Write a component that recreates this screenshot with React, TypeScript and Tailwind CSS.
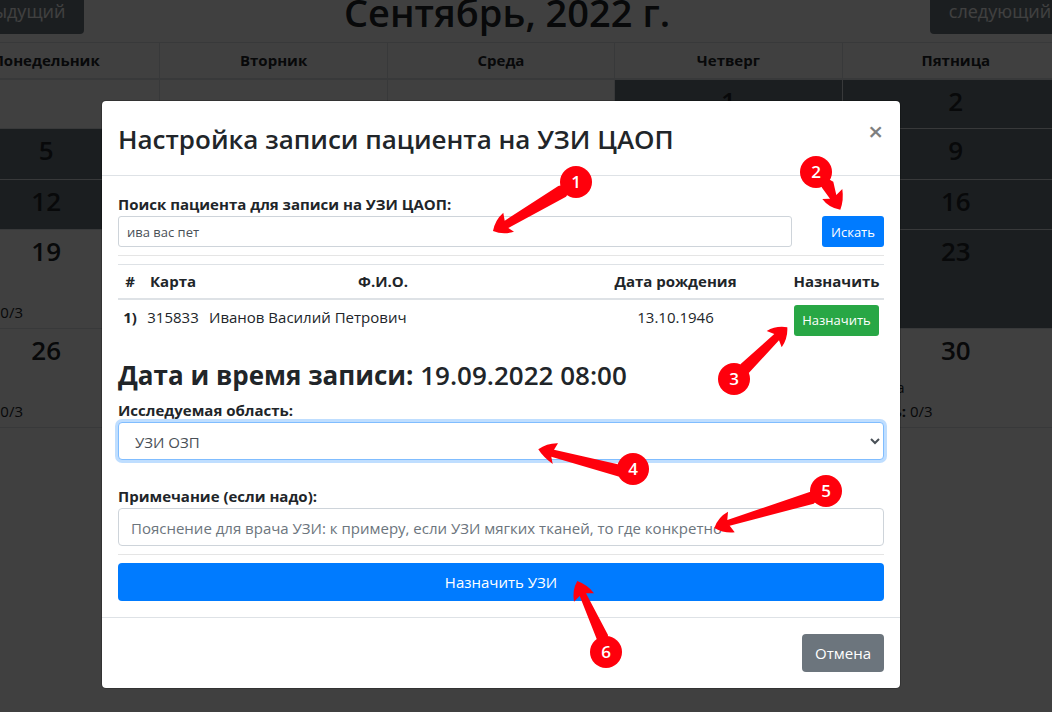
import React, { useState } from "react";

type Slot = { day?: number; busy?: boolean; name?: string; label?: string; quota?: string };

const weekdays = ["Понедельник", "Вторник", "Среда", "Четверг", "Пятница"];

const weeks: { height: string; slots: Slot[] }[] = [
  { height: "h-[50px]", slots: [{}, {}, {}, { day: 1, busy: true }, { day: 2, busy: true }] },
  {
    height: "h-[51px]",
    slots: [{ day: 5, busy: true }, { busy: true }, { busy: true }, { busy: true }, { day: 9, busy: true }],
  },
  {
    height: "h-[50px]",
    slots: [{ day: 12, busy: true }, { busy: true }, { busy: true }, { busy: true }, { day: 16, busy: true }],
  },
  {
    height: "h-[99px]",
    slots: [{ day: 19, quota: "0/3" }, {}, {}, {}, { day: 23, busy: true }],
  },
  {
    height: "h-[99px]",
    slots: [{ day: 26, quota: "0/3" }, {}, {}, {}, { day: 30, name: "а", label: "ь:", quota: "0/3" }],
  },
];

const markers = [
  { n: 1, x: 576, y: 182, d: "M493 231Q495 220 503.3 212.7L504.7 220.7L558.3 186L576 182L566 196.7L508.3 228L514 231.7Q503 235 493 231Z" },
  { n: 2, x: 816, y: 172, d: "M840.3 209.7Q829 208 822.3 199L830 198.7L822 187.7L816 172L833.3 181.7L836.3 195L842.3 189Q844 200 840.3 209.7Z" },
  { n: 3, x: 734, y: 379, d: "M787.3 327.3Q776 325.5 766.7 331L774.3 334L740.7 364L734 379L749 372.7L779 340.3L781.7 347.3Q788 338 787.3 327.3Z" },
  { n: 4, x: 633, y: 469, d: "M538.3 449.3Q547 443 558 443.3L554 449.7L616.7 464L633 469L619.3 476.7L551.3 456.7L552.7 464Q543 457 538.3 449.3Z" },
  { n: 5, x: 826, y: 491, d: "M714.3 528Q718 517 728 511.7L727.3 520L810.3 491.7L826 491L813.7 503.7L729.7 525.7L734.7 532.3Q724 533.5 714.3 528Z" },
  { n: 6, x: 606, y: 652, d: "M577.3 581Q572 590 574 601.7L579.7 596L596.7 639L606 652L608 635L586 593.3L594 593.3Q588 585 577.3 581Z" },
];

function Calendar() {
  return (
    <div className="-ml-[68px] -mr-[18px]">
      <div className="flex h-[42px] items-end justify-between pb-2">
        <button className="h-12 w-[152px] shrink-0 rounded bg-[#6c7880] pt-[2px] text-lg text-white">предыдущий</button>
        <h1 className="text-[38px] font-semibold leading-[44px]">Сентябрь, 2022 г.</h1>
        <button className="h-12 w-[140px] shrink-0 rounded bg-[#6c7880] pt-[2px] text-lg text-white">следующий</button>
      </div>
      <table className="w-full table-fixed border-collapse">
        <thead>
          <tr className="h-[36px]">
            {weekdays.map((d) => (
              <th key={d} className="border border-b-2 border-[#dee2e6] p-0 font-bold">
                {d}
              </th>
            ))}
          </tr>
        </thead>
        <tbody>
          {weeks.map((w, i) => (
            <tr key={i} className={w.height}>
              {w.slots.map((s, j) => (
                <td key={j} className={`border border-[#dee2e6] p-0 align-top ${s.busy ? "bg-[#6c7880]" : ""}`}>
                  {s.day && <div className="pt-[3px] text-center text-[26px] font-semibold leading-9">{s.day}</div>}
                  {s.quota && (
                    <div className="pt-[7px]">
                      <div className="h-6 w-[62px] text-right leading-6">{s.name}</div>
                      <div className="w-[90px] text-right leading-6">
                        <b>{s.label}</b> {s.quota}
                      </div>
                    </div>
                  )}
                </td>
              ))}
            </tr>
          ))}
        </tbody>
      </table>
    </div>
  );
}

function Dialog() {
  const [query, setQuery] = useState("ива вас пет");
  return (
    <div
      role="dialog"
      aria-labelledby="dialog-title"
      className="w-full max-w-[800px] rounded-[5px] border border-black/20 bg-white bg-clip-padding"
    >
      <header className="flex items-start justify-between border-b border-[#dee2e6] p-4">
        <h2 id="dialog-title" className="pt-[2px] text-[26px] font-semibold leading-10">
          Настройка записи пациента на УЗИ ЦАОП
        </h2>
        <button aria-label="Закрыть" className="px-px text-[26px] font-semibold leading-7 text-[#7f7f7f]">
          ×
        </button>
      </header>

      <div className="p-4">
        <label htmlFor="search" className="block font-bold leading-6">
          Поиск пациента для записи на УЗИ ЦАОП:
        </label>
        <div className="flex gap-[30px]">
          <input
            id="search"
            value={query}
            onChange={(e) => setQuery(e.target.value)}
            className="h-[31px] min-w-0 flex-1 rounded-[3px] border border-[#ced4da] px-2 text-[13px] text-[#495057]"
          />
          <button className="h-[31px] w-[62px] rounded-[3px] bg-[#007bff] pt-[2px] text-[13px] text-white">Искать</button>
        </div>
        <hr className="my-2 border-black/10" />

        <table className="mb-4 w-full table-fixed border-collapse">
          <colgroup>
            <col className="w-[24px]" />
            <col className="w-[62px]" />
            <col />
            <col className="w-[227px]" />
            <col className="w-[95px]" />
          </colgroup>
          <thead>
            <tr className="h-[34px] border-b-2 border-t border-[#dee2e6]">
              <th className="p-0">#</th>
              <th className="p-0">Карта</th>
              <th className="p-0">Ф.И.О.</th>
              <th className="p-0">Дата рождения</th>
              <th className="p-0">Назначить</th>
            </tr>
          </thead>
          <tbody>
            <tr className="h-[41px] align-top">
              <th className="p-0 pt-[5px] leading-6">1)</th>
              <td className="p-0 pt-[5px] text-center leading-6">315833</td>
              <td className="p-0 pl-[5px] pt-[5px] leading-6">Иванов Василий Петрович</td>
              <td className="p-0 pt-[5px] text-center leading-6">13.10.1946</td>
              <td className="p-0 pt-[5px] text-center">
                <button className="h-[31px] w-[85px] rounded-[3px] bg-[#28a745] pt-[2px] text-[13px] text-white">
                  Назначить
                </button>
              </td>
            </tr>
          </tbody>
        </table>

        <h3 className="mb-2 pt-1 text-[26px] font-semibold leading-[30px]">
          <span className="font-bold">Дата и время записи:</span> 19.09.2022 08:00
        </h3>

        <label htmlFor="area" className="block font-bold leading-6">
          Исследуемая область:
        </label>
        <select
          id="area"
          className="mb-6 block h-[38px] w-full rounded border border-[#80bdff] bg-white px-3 pt-[2px] text-[#495057] shadow-[0_0_0_3px_rgba(0,123,255,0.25)] outline-none"
        >
          <option>УЗИ ОЗП</option>
        </select>

        <label htmlFor="note" className="block font-bold leading-6">
          Примечание (если надо):
        </label>
        <input
          id="note"
          placeholder="Пояснение для врача УЗИ: к примеру, если УЗИ мягких тканей, то где конкретно"
          className="block h-[38px] w-full rounded border border-[#ced4da] px-3 pt-[2px] placeholder:text-[#6c757d]"
        />
        <hr className="my-2 border-black/10" />
        <button className="h-[38px] w-full rounded bg-[#007bff] pt-[2px] text-white">Назначить УЗИ</button>
      </div>

      <footer className="flex justify-end border-t border-[#dee2e6] p-4">
        <button className="h-[38px] w-[82px] rounded bg-[#6c757d] pt-[2px] text-white">Отмена</button>
      </footer>
    </div>
  );
}

export default function App() {
  return (
    <div className="relative min-h-screen overflow-hidden bg-white font-['Open_Sans','Noto_Sans',sans-serif] text-[15px] text-[#212529]">
      <Calendar />
      <div className="absolute inset-0 flex items-start justify-center bg-black/75 pr-[50px] pt-[100px]">
        <Dialog />
      </div>
      <svg className="pointer-events-none absolute left-0 top-0" width="1052" height="712" viewBox="0 0 1052 712">
        {markers.map((m) => (
          <g key={m.n}>
            <path d={m.d} fill="#ff000c" />
            <circle cx={m.x} cy={m.y} r="16" fill="#ff000c" />
            <text x={m.x} y={m.y + 6} textAnchor="middle" fontSize="17" fontWeight="600" fill="#fff">
              {m.n}
            </text>
          </g>
        ))}
      </svg>
    </div>
  );
}
